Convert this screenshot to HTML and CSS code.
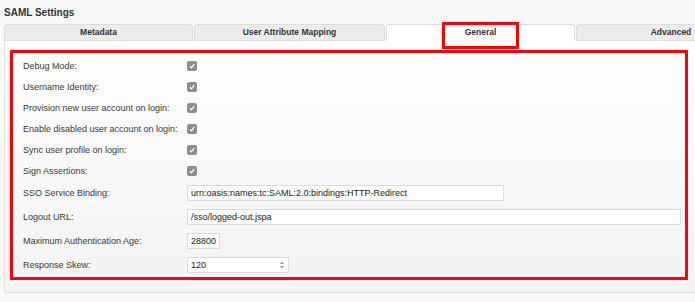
FILE: index.html
```html
<!DOCTYPE html>
<html lang="en">
<head>
  <meta charset="UTF-8" />
  <title>SAML Settings</title>
  <link rel="stylesheet" href="styles.css">
</head>
<body>
  <div class="page">
    <h2 class="title">SAML Settings</h2>
    <div class="tabs">
      <div class="tab tab-1">Metadata</div>
      <div class="tab tab-2">User Attribute Mapping</div>
      <div class="tab tab-3 active">General<span class="mark"></span></div>
      <div class="tab tab-4">Advanced</div>
    </div>
    <div class="panel">
      <div class="form-box">
        <div class="row check-row"><label>Debug Mode:</label><span class="check"><svg viewBox="0 0 10 10"><path d="M3 5.4 L4.4 6.8 L7.2 3.2" /></svg></span></div>
        <div class="row check-row"><label>Username Identity:</label><span class="check"><svg viewBox="0 0 10 10"><path d="M3 5.4 L4.4 6.8 L7.2 3.2" /></svg></span></div>
        <div class="row check-row"><label>Provision new user account on login:</label><span class="check"><svg viewBox="0 0 10 10"><path d="M3 5.4 L4.4 6.8 L7.2 3.2" /></svg></span></div>
        <div class="row check-row"><label>Enable disabled user account on login:</label><span class="check"><svg viewBox="0 0 10 10"><path d="M3 5.4 L4.4 6.8 L7.2 3.2" /></svg></span></div>
        <div class="row check-row"><label>Sync user profile on login:</label><span class="check"><svg viewBox="0 0 10 10"><path d="M3 5.4 L4.4 6.8 L7.2 3.2" /></svg></span></div>
        <div class="row check-row"><label>Sign Assertions:</label><span class="check"><svg viewBox="0 0 10 10"><path d="M3 5.4 L4.4 6.8 L7.2 3.2" /></svg></span></div>
        <div class="row field-row"><label>SSO Service Binding:</label><div class="field w-binding">urn:oasis:names:tc:SAML:2.0:bindings:HTTP-Redirect</div></div>
        <div class="row field-row"><label>Logout URL:</label><div class="field w-logout">/sso/logged-out.jspa</div></div>
        <div class="row field-row"><label>Maximum Authentication Age:</label><div class="field w-age">28800</div></div>
        <div class="row field-row"><label>Response Skew:</label><div class="field w-skew">120<svg class="spin" viewBox="0 0 6 10"><path d="M3 1.5 L5 4 L1 4 Z M3 8.5 L5 6 L1 6 Z" /></svg></div></div>
      </div>
    </div>
  </div>
</body>
</html>
```

FILE: styles.css
```css
body { margin: 0; padding: 0; background: #f9f9f9; color: #333; font-family: "Liberation Sans", Arial, sans-serif; }
.page { width: 695px; height: 302px; overflow: hidden; }
.title { margin: 0; padding: 7px 4px 5px; font-size: 10px; line-height: 12px; font-weight: bold; color: #333; }
.tabs { display: flex; margin-left: 4px; width: 800px; }
.tab { box-sizing: border-box; height: 17px; margin-right: 1px; border: 1px solid #dedede; border-radius: 3px 3px 0 0; background: #ececec; font-size: 8.5px; font-weight: bold; line-height: 15px; text-align: center; color: #333; position: relative; }
.tab-1 { width: 189px; }
.tab-2 { width: 191px; }
.tab-3 { width: 189px; }
.tab-4 { width: 190px; }
.tab.active { background: #fff; border-bottom-color: #fff; }
.mark { position: absolute; left: 55px; top: -3px; width: 77px; height: 27px; box-sizing: border-box; border: 3px solid #f00; }
.panel { margin-left: 4px; width: 780px; box-sizing: border-box; border: 1px solid #e2e2e2; border-top: none; background: linear-gradient(#fff, #f3f3f3); padding: 9px 0 12px 5px; }
.form-box { box-sizing: border-box; width: 678px; border: 3px solid #f00; padding: 2px 0 0 10px; }
.row { display: flex; align-items: center; font-size: 9px; color: #3a3a3a; }
.row label { width: 164px; flex: none; }
.check-row { height: 21px; }
.field-row { height: 24px; }
.check { width: 10px; height: 10px; border-radius: 2px; background: #8e8e8e; display: block; }
.check svg { width: 10px; height: 10px; display: block; }
.check path { fill: none; stroke: #fff; stroke-width: 1.3; }
.field { box-sizing: border-box; height: 16px; border: 1px solid #dcdcdc; background: #fff; padding-left: 3px; font-size: 9px; line-height: 14px; color: #222; display: flex; align-items: center; justify-content: space-between; }
.w-binding { width: 317px; }
.w-logout { width: 494px; }
.w-age { width: 33px; }
.w-skew { width: 102px; }
.spin { width: 6px; height: 10px; margin-right: 3px; }
.spin path { fill: #999; }
```
